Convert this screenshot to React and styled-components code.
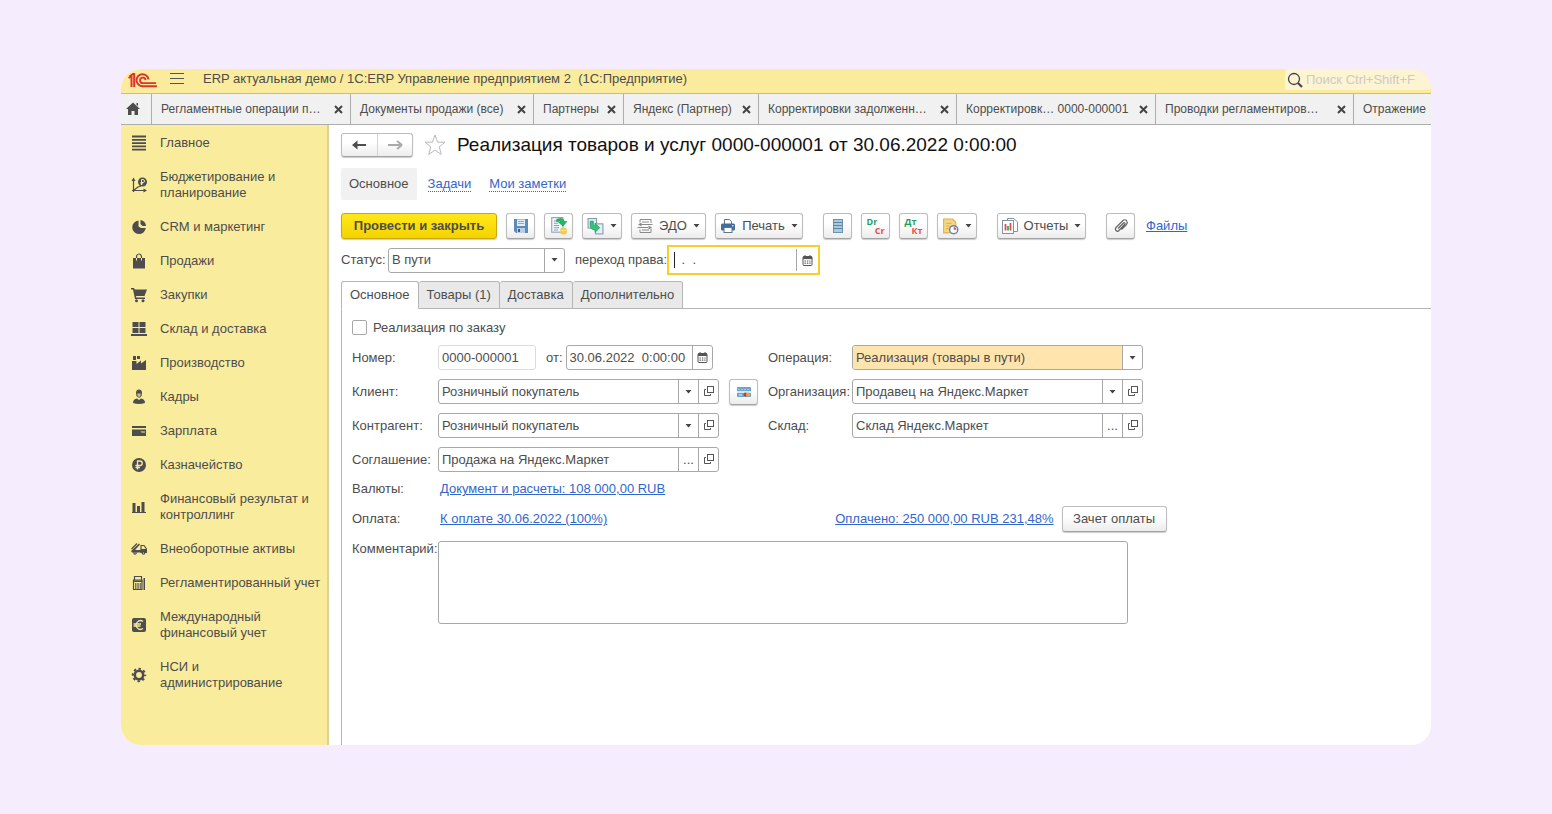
import React, { useState } from "react";
import styled, { createGlobalStyle, css } from "styled-components";

const GlobalStyle = createGlobalStyle`
  * {
    box-sizing: border-box;
  }

  body {
    margin: 0;
    background-color: #f5edfe;
    font-family: "Liberation Sans", Arial, sans-serif;
    font-size: 13px;
    line-height: 16px;
    color: #4d4d4d;
  }

  button,
  input,
  select,
  textarea {
    font: inherit;
    color: inherit;
  }
`;

// Page frame
const Page = styled.div`
  min-height: 100vh;
  padding: 69px 121px;
  display: flex;
`;

const AppWindow = styled.div`
  flex: 1;
  min-width: 0;
  display: flex;
  flex-direction: column;
  background-color: #fff;
  border-radius: 20px;
  overflow: hidden;
`;

const TitleBar = styled.header`
  display: flex;
  align-items: center;
  height: 25px;
  padding-left: 7px;
  background-color: #fbeb9c;
  border-bottom: 1px solid #cdbf78;
`;

const MenuButton = styled.button`
  display: flex;
  margin: 0 19px 0 12px;
  padding: 0 0 4px;
  border: none;
  background: none;
`;

const AppTitle = styled.div`
  flex: 1;
  white-space: pre;
  padding-bottom: 4px;
`;

const SearchBox = styled.label`
  display: flex;
  align-items: center;
  align-self: flex-start;
  gap: 3px;
  width: 146px;
  height: 21px;
  padding: 0 2px;
  background-color: #fcf4d2;
  border-radius: 3px;

  input {
    min-width: 0;
    flex: 1;
    padding: 0;
    border: none;
    outline: none;
    background: none;
  }

  input::placeholder {
    color: #cfcac2;
    opacity: 1;
  }
`;

// Opened windows bar
const WindowTabs = styled.nav`
  display: flex;
  height: 31px;
  background-color: #f1f1f1;
  border-bottom: 1px solid #adadad;
  font-size: 12px;
  overflow: hidden;
`;

const HomeButton = styled.button`
  flex: none;
  display: flex;
  align-items: center;
  width: 30px;
  padding: 0 0 0 4px;
  border: none;
  background: none;
`;

const WindowTab = styled.div`
  flex: none;
  display: flex;
  align-items: center;
  justify-content: space-between;
  width: ${(props) => props.$width}px;
  padding: 0 7px 0 9px;
  border-left: 1px solid #adadad;
  white-space: nowrap;

  button {
    display: flex;
    padding: 0;
    border: none;
    background: none;
  }
`;

const Body = styled.div`
  flex: 1;
  display: flex;
`;

// Sidebar
const Sidebar = styled.nav`
  flex: none;
  width: 208px;
  padding-top: 1px;
  background-color: #faec9d;
  border-right: 2px solid #dcd094;
`;

const SidebarItem = styled.a`
  display: flex;
  align-items: center;
  gap: 13px;
  padding: 9px 0 9px 10px;
  color: inherit;
  text-decoration: none;

  svg {
    flex: none;
  }

  span {
    max-width: ${(props) => (props.$narrow ? "130px" : "none")};
  }
`;

// Document area
const Content = styled.main`
  flex: 1;
  min-width: 0;
  display: flex;
  flex-direction: column;
  padding: 8px 0 0 12px;
`;

const DocumentHeader = styled.div`
  display: flex;
  align-items: center;
  gap: 11px;
`;

const raised = css`
  border: 1px solid #bdbdbd;
  border-bottom-color: #a3a3a3;
  border-radius: 3px;
  background: linear-gradient(#fff 40%, #ececec);
  box-shadow: 0 1px 1px rgba(0, 0, 0, 0.2);
`;

const HistoryButtons = styled.div`
  display: flex;
  width: 72px;
  height: 24px;
  ${raised}

  button {
    flex: 1;
    display: flex;
    align-items: center;
    justify-content: center;
    padding: 0;
    border: none;
    background: none;
  }

  button + button {
    border-left: 1px solid #d5d5d5;
  }
`;

const DocumentTitle = styled.h1`
  margin: 0;
  font-size: 19px;
  line-height: 24px;
  font-weight: normal;
  color: #111;
`;

const SectionNav = styled.nav`
  display: flex;
  align-items: center;
  gap: 18px;
  margin-top: 11px;
`;

const CurrentSection = styled.span`
  margin-right: -7px;
  padding: 8px;
  border-radius: 2px;
  background-color: #f1f1f1;
`;

const DottedLink = styled.a`
  color: #3366cc;
  line-height: 15px;
  text-decoration: none;
  border-bottom: 1px dotted #3366cc;
`;

const Link = styled.a`
  color: #3366cc;
  text-decoration: underline;
`;

const Toolbar = styled.div`
  display: flex;
  align-items: center;
  gap: 20px;
  margin-top: 13px;
`;

const ButtonGroup = styled.div`
  display: flex;
  gap: ${(props) => props.$gap || 9}px;
  align-items: center;
`;

const ToolButton = styled.button`
  flex: none;
  display: flex;
  align-items: center;
  justify-content: center;
  gap: 6px;
  min-width: 29px;
  width: ${(props) => (props.$width ? `${props.$width}px` : "auto")};
  height: 26px;
  padding: 0;
  white-space: nowrap;
  ${raised}
`;

const PrimaryButton = styled(ToolButton)`
  border-color: #c9a800;
  background: linear-gradient(#ffe81a, #f4d300);
  font-weight: bold;
`;

const Entry = styled.span`
  display: flex;
  flex-direction: column;
  width: 18px;
  font-family: "Open Sans", sans-serif;
  font-size: 9px;
  font-weight: bold;
  line-height: 9px;
  text-align: left;
  color: #1fa060;

  span:last-child {
    text-align: right;
    color: #ee4b4b;
  }
`;

// Fields
const StatusRow = styled.div`
  display: flex;
  align-items: center;
  height: 30px;
  margin-top: 6px;

  > label:nth-of-type(2) {
    margin-left: 10px;
  }
`;

const StatusLabel = styled.label`
  width: ${(props) => props.$width}px;
  flex: none;
  white-space: nowrap;
`;

const Field = styled.div`
  display: flex;
  width: ${(props) => (props.$width ? `${props.$width}px` : "100%")};
  height: 25px;
  border: 1px solid ${(props) => (props.$readOnly ? "#dcdcdc" : "#a8a8a8")};
  border-radius: 3px;
  background-color: #fff;
  overflow: hidden;

  input,
  select {
    flex: 1;
    min-width: 0;
    padding: 0 3px;
    border: none;
    outline: none;
    appearance: none;
    white-space: pre;
    background-color: ${(props) => (props.$accent ? "#ffe4ae" : "transparent")};
  }

  button {
    flex: none;
    display: flex;
    align-items: center;
    justify-content: center;
    width: 20px;
    padding: 0;
    border: none;
    border-left: 1px solid #a8a8a8;
    background: none;
  }
`;

const ActiveField = styled(Field)`
  height: 30px;
  padding: 2px 0;
  border: 2px solid #f8cd2c;
  border-radius: 0;

  button {
    width: 22px;
  }
`;

const Caret = styled.span`
  align-self: center;
  width: 1px;
  height: 16px;
  margin-left: 5px;
  background-color: #222;
`;

const FormTabs = styled.div`
  display: flex;
  margin-top: 6px;
  border-bottom: 1px solid #b5b5b5;
`;

const FormTab = styled.button`
  height: 28px;
  margin-bottom: -1px;
  padding: 0 8px;
  border: 1px solid #b5b5b5;
  border-left-width: ${(props) => (props.$first ? "1px" : "0")};
  border-bottom-color: ${(props) => (props.$active ? "#fff" : "#b5b5b5")};
  border-radius: 3px 3px 0 0;
  background-color: ${(props) => (props.$active ? "#fff" : "#e9e9e9")};
`;

const FormPanel = styled.div`
  flex: 1;
  padding: 11px 0 0 10px;
  border-left: 1px solid #b5b5b5;
`;

const CheckRow = styled.label`
  display: flex;
  align-items: center;
  gap: 6px;
  height: 15px;

  input {
    appearance: none;
    width: 15px;
    height: 15px;
    margin: 0;
    border: 1px solid #a8a8a8;
    border-radius: 2px;
    background-color: #fff;
  }
`;

const FormGrid = styled.div`
  display: grid;
  grid-template-columns: 86px 281px 49px 84px 291px;
  grid-auto-rows: 25px;
  row-gap: 9px;
  align-items: center;
  margin-top: 10px;
`;

const CardCell = styled.div`
  display: flex;
  justify-content: center;
`;

const NumberCell = styled.div`
  display: flex;
  align-items: center;

  label {
    margin: 0 3px 0 10px;
  }
`;

const LinkRow = styled.div`
  display: flex;
  align-items: center;
  height: 26px;
  margin-top: 4px;
`;

const LinkLabel = styled.span`
  width: 88px;
`;

const PaidGroup = styled.div`
  display: flex;
  align-items: center;
  gap: 8px;
  margin-left: 228px;
`;

const CommentRow = styled.div`
  display: flex;
  margin-top: 9px;

  textarea {
    width: 690px;
    height: 83px;
    border: 1px solid #a8a8a8;
    border-radius: 3px;
    outline: none;
    resize: none;
  }
`;

const CommentLabel = styled.label`
  width: 86px;
`;

// Icons
const Icon = ({ size = 16, children }) => (
  <svg width={size} height={size} viewBox="0 0 16 16" fill="currentColor" aria-hidden="true">
    {children}
  </svg>
);

const Logo = () => (
  <svg width="30" height="16" viewBox="0 0 30 16" fill="none" stroke="#e0332c" aria-hidden="true">
    <path d="M0.500 5 L3.500 3 V14 M1.500 3.500 L5 1 H6.200 V14" strokeWidth="2" />
    <path d="M20.500 6.500 A6 6 0 1 0 15 13.200 H29" strokeWidth="2" />
    <path d="M17.600 7 A2.800 2.800 0 1 0 15 10.200 H28" strokeWidth="1.800" />
  </svg>
);

const SmallArrow = () => (
  <svg width="7" height="4" viewBox="0 0 7 4" fill="#444" aria-hidden="true">
    <path d="M0.500 0 H6.500 L3.500 3.500 Z" />
  </svg>
);

const CloseIcon = () => (
  <svg width="9" height="9" viewBox="0 0 9 9" stroke="#444" strokeWidth="2" aria-hidden="true">
    <path d="M1 1 L8 8 M8 1 L1 8" />
  </svg>
);

const CalendarIcon = () => (
  <svg width="11" height="11" viewBox="0 0 11 11" fill="none" stroke="#555" aria-hidden="true">
    <rect x="1" y="1.500" width="9" height="9" rx="1" />
    <path d="M1 2.800 H10" strokeWidth="2.600" />
    <path d="M3 0 V2 M8 0 V2" />
    <path d="M2.500 6 H8.500 M2.500 8.200 H8.500" strokeDasharray="1.400 1" strokeWidth="1.200" />
  </svg>
);

const OpenIcon = () => (
  <svg width="11" height="11" viewBox="0 0 11 11" fill="none" stroke="#555" aria-hidden="true">
    <rect x="4.500" y="0.500" width="6" height="6" />
    <path d="M3 3.500 H1.500 V9.500 H7.500 V8" />
  </svg>
);

const SaveIcon = () => (
  <Icon>
    <path d="M1 1 H15 V15 H3 L1 13 Z" fill="#5b8abb" />
    <rect x="4" y="1.500" width="8" height="6.500" fill="#e3edf6" />
    <path d="M5 3.500 H11 M5 5.500 H11" stroke="#8aa9c6" />
    <rect x="4" y="10" width="8" height="5" fill="#b9cfe2" />
    <rect x="5" y="11" width="2" height="3" fill="#36618c" />
  </Icon>
);

const PostIcon = () => (
  <Icon size={18}>
    <rect x="1.500" y="0.500" width="10" height="13" fill="#eef3f7" stroke="#93a7b8" />
    <path d="M3.500 3.500 H7 M3.500 5.500 H7 M3.500 7.500 H8 M3.500 9.500 H8 M3.500 11.500 H7" stroke="#8ba0b3" />
    <path d="M6 2 Q12 0 12.500 4 H15 L11.500 8 L7.500 4.500 H10 Q9.500 3 6 4 Z" fill="#1ebb68" stroke="#118548" strokeWidth="0.500" />
    <rect x="9" y="9.500" width="6" height="6" rx="2" fill="#f3cb52" />
    <path d="M9.500 12 H14.500" stroke="#fbe69b" />
  </Icon>
);

const BasedOnIcon = () => (
  <Icon size={17}>
    <rect x="1" y="0.500" width="8" height="9" fill="#e6eef4" stroke="#8299ac" />
    <rect x="8" y="5.500" width="7" height="9.500" fill="#e6eef4" stroke="#8299ac" />
    <path d="M3 3 H6 V6 Q6 7.500 7.500 7.500 V5 L12 9.200 L7.500 13.500 V11 Q3 11 3 7 Z" fill="#2cc878" stroke="#168e50" strokeWidth="0.600" />
  </Icon>
);

const EdoIcon = () => (
  <Icon>
    <path
      d="M3 4.500 V1.500 H14 V5 M3 11.500 V14.500 H14 V10.500 M5 4 H12 M4 6.500 H15.500 M0.500 9.500 H11 M5 12 H12"
      fill="none"
      stroke="#8a8a8a"
    />
    <path d="M4.500 4.500 L1 6.500 L4.500 8.500 Z M11.500 7.500 L15 9.500 L11.500 11.500 Z" fill="#8a8a8a" />
  </Icon>
);

const PrintIcon = () => (
  <Icon>
    <path d="M4.500 6 V1.500 H9.500 L11.500 3.500 V6" fill="#fff" stroke="#5d7387" />
    <rect x="1" y="5.500" width="14" height="7" rx="1.500" fill="#416e96" />
    <rect x="4" y="9.500" width="8" height="5" fill="#fff" stroke="#5d7387" />
    <rect x="12" y="7" width="1.500" height="1.500" fill="#cde" />
  </Icon>
);

const RegisterIcon = () => (
  <Icon>
    <rect x="3.500" y="1.500" width="9" height="13" fill="#a9c9de" stroke="#6d93af" />
    <path d="M3.500 4.500 H12.500 M3.500 7.500 H12.500 M3.500 10.500 H12.500" stroke="#5d86a5" />
  </Icon>
);

const DocClockIcon = () => (
  <Icon size={17}>
    <path d="M1.500 1 H10 L13 4 V14 H1.500 Z" fill="#f4d684" stroke="#dcb250" />
    <path d="M4 5 H9 M4 7.500 H7 M4 10 H6" stroke="#d9ae4a" />
    <circle cx="11" cy="11" r="3.800" fill="#fff" stroke="#6d83a5" strokeWidth="1.400" />
    <path d="M11 11 V8.500 A2.500 2.500 0 0 1 13.500 11 Z" fill="#e05555" />
  </Icon>
);

const ReportsIcon = () => (
  <Icon>
    <path d="M5.500 3 V0.500 H12 L15.500 4 V13.500 H12" fill="#fff" stroke="#7e93a3" />
    <rect x="0.500" y="2.500" width="11" height="13" fill="#fff" stroke="#7e93a3" />
    <path d="M3.500 6 V12.500" stroke="#e34b4b" strokeWidth="1.800" />
    <path d="M6 8 V12.500" stroke="#2eaa5e" strokeWidth="1.800" />
    <path d="M8.500 5 V12.500" stroke="#e34b4b" strokeWidth="1.800" />
  </Icon>
);

const ClipIcon = () => (
  <Icon>
    <path
      d="M5 10.500 L10.500 5 Q11.500 4 12 5 Q12.500 5.500 11.500 6.500 L6 12.500 Q4.500 14 3 12.500 Q1.500 11 3.500 9 L10 2.500 Q11.500 1 13.500 2.500 Q15 4.500 13.500 6.500 L8.500 11.500"
      fill="none"
      stroke="#666"
      strokeWidth="1.200"
    />
  </Icon>
);

const CardIcon = () => (
  <Icon>
    <rect x="1" y="3" width="14" height="10" rx="1" fill="#6da5d0" />
    <path d="M2 5.500 H14" stroke="#a9cbe5" strokeDasharray="2 1" />
    <rect x="1" y="7" width="14" height="2" fill="#d8e8f3" />
    <path d="M3 11 H6" stroke="#e9f2f9" />
    <circle cx="9.500" cy="10.500" r="2" fill="#e02f2f" />
    <circle cx="12" cy="10.500" r="2" fill="#f4a52c" />
  </Icon>
);

const sections = [
  {
    title: "Главное",
    icon: <path d="M1 1.500 H15 M1 4.800 H15 M1 8.100 H15 M1 11.400 H15 M1 14.700 H15" stroke="currentColor" strokeWidth="1.800" />,
  },
  {
    title: "Бюджетирование и планирование",
    icon: (
      <>
        <path d="M2.500 15 V3 M1 13.500 H14 M3 13 L7 10 L10 9" fill="none" stroke="currentColor" strokeWidth="1.200" />
        <path d="M0.500 4 L2.500 0.500 L4.500 4 Z M12.500 11.500 L16 13.500 L12.500 15.500 Z" />
        <circle cx="11.500" cy="5" r="4.500" />
        <path d="M10.500 8 V2.500 H12 A1.500 1.500 0 0 1 12 5.500 H9.500 M9.500 6.800 H12" fill="none" stroke="#f9eb9c" />
      </>
    ),
  },
  {
    title: "CRM и маркетинг",
    icon: (
      <>
        <path d="M7.500 1.500 A6.800 6.800 0 1 0 14.800 9 H10 L7.500 7.500 Z" />
        <path d="M9.500 1 A6.500 6.500 0 0 1 15 7 H11.500 L9.500 5 Z" />
      </>
    ),
  },
  {
    title: "Продажи",
    icon: (
      <>
        <path d="M2 5 H14 V15.500 H2 Z" />
        <path d="M5.500 7 V4 A2.500 3 0 0 1 10.500 4 V7" fill="none" stroke="currentColor" strokeWidth="1.200" />
        <path d="M5.500 5 V7.500 M10.500 5 V7.500" stroke="#f9eb9c" />
      </>
    ),
  },
  {
    title: "Закупки",
    icon: (
      <>
        <path d="M0 1 H3 L3.800 2.500 H16 L13.500 9 H5 L5.300 10.500 H14 V12 H4 L2 2.500 H0 Z" />
        <circle cx="5.500" cy="13.800" r="1.500" />
        <circle cx="12" cy="13.800" r="1.500" />
      </>
    ),
  },
  {
    title: "Склад и доставка",
    icon: <path d="M1.500 1 H7.500 V6 H1.500 Z M8.500 1 H14.500 V6 H8.500 Z M1.500 7 H7.500 V12 H1.500 Z M8.500 7 H14.500 V12 H8.500 Z M0 13 H16 V15 H0 Z" />,
  },
  {
    title: "Производство",
    icon: <path d="M2 1 H5 V5 H2 Z M6 1 H9 V4 H6 Z M1 15 V6 H5.500 V9 L10 5.500 V8.500 L15 5 V15 Z" />,
  },
  {
    title: "Кадры",
    icon: (
      <>
        <path d="M5 4 Q5 0.500 8 0.500 Q11 0.500 11 4 L10.500 7 Q8 10.500 5.500 7 Z" />
        <path d="M6.200 4.500 H9.800 Q9.500 8 8 8 Q6.500 8 6.200 4.500 Z" fill="#c9bd80" />
        <path d="M2 14 Q2 10 6 9.500 L8 11 L10 9.500 Q14 10 14 14 Q8 16 2 14 Z" />
      </>
    ),
  },
  {
    title: "Зарплата",
    icon: (
      <>
        <path d="M1 3 H15 V5 H1 Z M1 6.500 H15 V13 H1 Z" />
        <path d="M9.500 8.500 H14 V9.500 H10.500 Z" fill="#f9eb9c" />
      </>
    ),
  },
  {
    title: "Казначейство",
    icon: (
      <>
        <circle cx="8" cy="8" r="7" />
        <path d="M6.500 12.500 V4 H9 A2.200 2.200 0 0 1 9 8.500 H4.500 M4.500 10.500 H9" fill="none" stroke="#f9eb9c" strokeWidth="1.300" />
      </>
    ),
  },
  {
    title: "Финансовый результат и контроллинг",
    icon: <path d="M1.500 4 H4.500 V13 H1.500 Z M6 7 H9 V13 H6 Z M10.500 3 H13.500 V13 H10.500 Z M1 13 H15 V14 H1 Z" />,
  },
  {
    title: "Внеоборотные активы",
    icon: (
      <>
        <path d="M0 10 L8 2.500 L9 3.500 L4 9 H10 V11.500 H1 Z" />
        <path d="M10 11.500 V4.500 H13 L15.500 8 V11.500 Z M0.500 8 L6 2.500" fill="none" stroke="currentColor" strokeWidth="1.200" />
        <path d="M10 8 H15.500 V12 H10 Z" />
        <circle cx="4" cy="12" r="1.800" />
        <circle cx="12.500" cy="12" r="1.800" />
        <path d="M3.500 12 H4.500 M12 12 H13" stroke="#f9eb9c" />
      </>
    ),
  },
  {
    title: "Регламентированный учет",
    icon: (
      <>
        <path d="M3.500 5 V1.500 H10.500 V5 M2.500 5 H11 V14.500 H2.500 Z" fill="none" stroke="currentColor" strokeWidth="1.200" />
        <path d="M2 5.500 H11.500 V7 H2 Z M12.500 3 H14 V15 H12.500 Z" />
        <path d="M4 9 H10.500 M4 11 H10.500 M4 13 H10.500" stroke="currentColor" strokeWidth="1.400" strokeDasharray="1.500 0.800" />
      </>
    ),
  },
  {
    title: "Международный финансовый учет",
    narrow: true,
    icon: (
      <>
        <rect x="1" y="1" width="14" height="14" rx="2" />
        <path d="M12 4.500 A4.300 4.300 0 1 0 12 11.500 M2.500 7 H10 M2.500 9 H9.500" fill="none" stroke="#f9eb9c" strokeWidth="1.300" />
      </>
    ),
  },
  {
    title: "НСИ и администрирование",
    narrow: true,
    icon: (
      <>
        <circle cx="8" cy="8" r="4.200" fill="none" stroke="currentColor" strokeWidth="2.600" />
        <circle cx="8" cy="8" r="6.200" fill="none" stroke="currentColor" strokeWidth="2" strokeDasharray="2.400 2.470" strokeDashoffset="1.200" />
      </>
    ),
  },
];

const windows = [
  { title: "Регламентные операции п…", width: 199 },
  { title: "Документы продажи (все)", width: 183 },
  { title: "Партнеры", width: 90 },
  { title: "Яндекс (Партнер)", width: 135 },
  { title: "Корректировки задолженн…", width: 198 },
  { title: "Корректировк… 0000-000001", width: 199 },
  { title: "Проводки регламентиров…", width: 198 },
  { title: "Отражение", width: 199 },
];

const formTabs = ["Основное", "Товары (1)", "Доставка", "Дополнительно"];

const LookupField = ({ id, value, onChange, choose }) => (
  <Field>
    <input id={id} value={value} onChange={onChange} />
    <button aria-label="Выбрать">{choose ? "..." : <SmallArrow />}</button>
    <button aria-label="Открыть">
      <OpenIcon />
    </button>
  </Field>
);

const App = () => {
  const [activeTab, setActiveTab] = useState("Основное");
  const [form, setForm] = useState({
    transferDate: " .  .",
    date: "30.06.2022  0:00:00",
    client: "Розничный покупатель",
    contractor: "Розничный покупатель",
    agreement: "Продажа на Яндекс.Маркет",
    organization: "Продавец на Яндекс.Маркет",
    warehouse: "Склад Яндекс.Маркет",
    comment: "",
  });

  const handleChange = (name) => (e) => {
    setForm({ ...form, [name]: e.target.value });
  };

  return (
    <Page>
      <GlobalStyle />
      <AppWindow>
        <TitleBar>
          <Logo />
          <MenuButton aria-label="Меню">
            <svg width="14" height="12" viewBox="0 0 14 12" stroke="#555" aria-hidden="true">
              <path d="M0 0.500 H14 M0 5.500 H14 M0 10.500 H14" />
            </svg>
          </MenuButton>
          <AppTitle>ERP актуальная демо / 1С:ERP Управление предприятием 2  (1С:Предприятие)</AppTitle>
          <SearchBox>
            <Icon>
              <circle cx="7" cy="7" r="5.500" fill="none" stroke="#444" strokeWidth="1.300" />
              <path d="M11 11 L15 15" stroke="#444" strokeWidth="2.200" />
            </Icon>
            <input type="search" aria-label="Поиск" placeholder="Поиск Ctrl+Shift+F" />
          </SearchBox>
        </TitleBar>

        <WindowTabs>
          <HomeButton aria-label="Начальная страница">
            <Icon>
              <path d="M8 1.500 L15 8 H13 V14 H9.500 V10 H6.500 V14 H3 V8 H1 Z M11.500 2 H13 V5 L11.500 4 Z" />
            </Icon>
          </HomeButton>
          {windows.map((item) => (
            <WindowTab key={item.title} $width={item.width}>
              <span>{item.title}</span>
              <button aria-label="Закрыть">
                <CloseIcon />
              </button>
            </WindowTab>
          ))}
        </WindowTabs>

        <Body>
          <Sidebar>
            {sections.map((section) => (
              <SidebarItem key={section.title} href="#" $narrow={section.narrow}>
                <Icon>{section.icon}</Icon>
                <span>{section.title}</span>
              </SidebarItem>
            ))}
          </Sidebar>

          <Content>
            <DocumentHeader>
              <HistoryButtons>
                <button aria-label="Назад">
                  <Icon>
                    <path d="M1 8 L6.500 3.500 V7 H15 V9 H6.500 V12.500 Z" />
                  </Icon>
                </button>
                <button aria-label="Вперед">
                  <Icon>
                    <path d="M15 8 L10 4 M15 8 L10 12 M1 8 H14" stroke="#aaa" strokeWidth="2" />
                  </Icon>
                </button>
              </HistoryButtons>
              <svg width="22" height="22" viewBox="0 0 22 22" fill="#fff" stroke="#b5b9bf" aria-hidden="true">
                <path d="M11 1 L13.600 8.200 H21 L15.200 12.800 L17.300 20.500 L11 16 L4.700 20.500 L6.800 12.800 L1 8.200 H8.400 Z" />
              </svg>
              <DocumentTitle>Реализация товаров и услуг 0000-000001 от 30.06.2022 0:00:00</DocumentTitle>
            </DocumentHeader>

            <SectionNav>
              <CurrentSection>Основное</CurrentSection>
              <DottedLink href="#">Задачи</DottedLink>
              <DottedLink href="#">Мои заметки</DottedLink>
            </SectionNav>

            <Toolbar>
              <ButtonGroup>
                <PrimaryButton $width={156}>Провести и закрыть</PrimaryButton>
                <ToolButton aria-label="Записать">
                  <SaveIcon />
                </ToolButton>
                <ToolButton aria-label="Провести">
                  <PostIcon />
                </ToolButton>
                <ToolButton $width={40} aria-label="Создать на основании">
                  <BasedOnIcon />
                  <SmallArrow />
                </ToolButton>
                <ToolButton $width={75}>
                  <EdoIcon />
                  ЭДО
                  <SmallArrow />
                </ToolButton>
                <ToolButton $width={88}>
                  <PrintIcon />
                  Печать
                  <SmallArrow />
                </ToolButton>
              </ButtonGroup>
              <ButtonGroup>
                <ToolButton aria-label="Движения документа">
                  <RegisterIcon />
                </ToolButton>
                <ToolButton>
                  <Entry>
                    <span>Dr</span>
                    <span>Cr</span>
                  </Entry>
                </ToolButton>
                <ToolButton>
                  <Entry>
                    <span>Дт</span>
                    <span>Кт</span>
                  </Entry>
                </ToolButton>
                <ToolButton $width={40} aria-label="История">
                  <DocClockIcon />
                  <SmallArrow />
                </ToolButton>
              </ButtonGroup>
              <ToolButton $width={89}>
                <ReportsIcon />
                Отчеты
                <SmallArrow />
              </ToolButton>
              <ButtonGroup $gap={11}>
                <ToolButton aria-label="Прикрепить">
                  <ClipIcon />
                </ToolButton>
                <Link href="#">Файлы</Link>
              </ButtonGroup>
            </Toolbar>

            <StatusRow>
              <StatusLabel htmlFor="status" $width={47}>
                Статус:
              </StatusLabel>
              <Field $width={177}>
                <select id="status" defaultValue="В пути">
                  <option>В пути</option>
                  <option>Реализовано</option>
                </select>
                <button aria-label="Выбрать статус">
                  <SmallArrow />
                </button>
              </Field>
              <StatusLabel htmlFor="transferDate" $width={92}>
                переход права:
              </StatusLabel>
              <ActiveField $width={153}>
                <Caret />
                <input id="transferDate" value={form.transferDate} onChange={handleChange("transferDate")} />
                <button aria-label="Выбрать дату">
                  <CalendarIcon />
                </button>
              </ActiveField>
            </StatusRow>

            <FormTabs>
              {formTabs.map((tab, index) => (
                <FormTab key={tab} $first={index === 0} $active={tab === activeTab} onClick={() => setActiveTab(tab)}>
                  {tab}
                </FormTab>
              ))}
            </FormTabs>

            <FormPanel>
              <CheckRow>
                <input type="checkbox" />
                Реализация по заказу
              </CheckRow>

              <FormGrid>
                <label htmlFor="number">Номер:</label>
                <NumberCell>
                  <Field $width={98} $readOnly>
                    <input id="number" value="0000-000001" readOnly />
                  </Field>
                  <label htmlFor="date">от:</label>
                  <Field $width={147}>
                    <input id="date" value={form.date} onChange={handleChange("date")} />
                    <button aria-label="Выбрать дату">
                      <CalendarIcon />
                    </button>
                  </Field>
                </NumberCell>
                <span />
                <label htmlFor="operation">Операция:</label>
                <Field $accent>
                  <select id="operation" defaultValue="Реализация (товары в пути)">
                    <option>Реализация (товары в пути)</option>
                  </select>
                  <button aria-label="Выбрать операцию">
                    <SmallArrow />
                  </button>
                </Field>

                <label htmlFor="client">Клиент:</label>
                <LookupField id="client" value={form.client} onChange={handleChange("client")} />
                <CardCell>
                  <ToolButton aria-label="Карта лояльности">
                    <CardIcon />
                  </ToolButton>
                </CardCell>
                <label htmlFor="organization">Организация:</label>
                <LookupField id="organization" value={form.organization} onChange={handleChange("organization")} />

                <label htmlFor="contractor">Контрагент:</label>
                <LookupField id="contractor" value={form.contractor} onChange={handleChange("contractor")} />
                <span />
                <label htmlFor="warehouse">Склад:</label>
                <LookupField id="warehouse" value={form.warehouse} onChange={handleChange("warehouse")} choose />

                <label htmlFor="agreement">Соглашение:</label>
                <LookupField id="agreement" value={form.agreement} onChange={handleChange("agreement")} choose />
              </FormGrid>

              <LinkRow>
                <LinkLabel>Валюты:</LinkLabel>
                <Link href="#">Документ и расчеты: 108 000,00 RUB</Link>
              </LinkRow>
              <LinkRow>
                <LinkLabel>Оплата:</LinkLabel>
                <Link href="#">К оплате 30.06.2022 (100%)</Link>
                <PaidGroup>
                  <Link href="#">Оплачено: 250 000,00 RUB 231,48%</Link>
                  <ToolButton $width={105}>Зачет оплаты</ToolButton>
                </PaidGroup>
              </LinkRow>

              <CommentRow>
                <CommentLabel htmlFor="comment">Комментарий:</CommentLabel>
                <textarea id="comment" value={form.comment} onChange={handleChange("comment")} />
              </CommentRow>
            </FormPanel>
          </Content>
        </Body>
      </AppWindow>
    </Page>
  );
};

export default App;
